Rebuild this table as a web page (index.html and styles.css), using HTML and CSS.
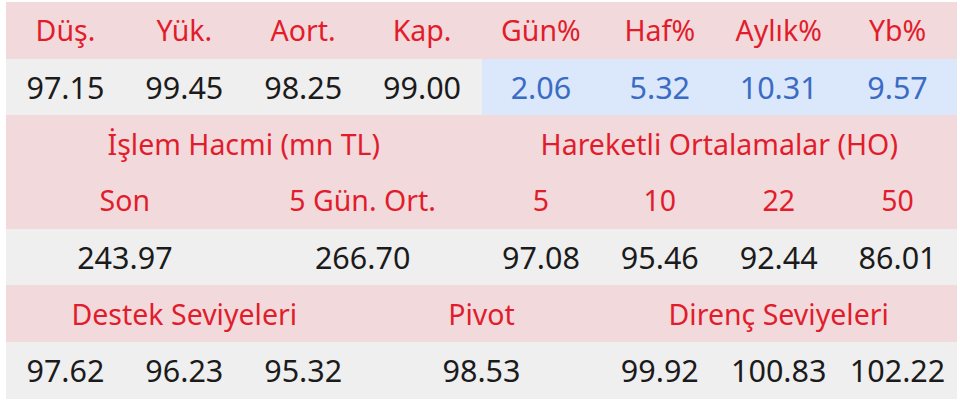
FILE: index.html
```html
<!DOCTYPE html>
<html lang="tr">
<head>
<meta charset="utf-8">
<link rel="stylesheet" href="styles.css">
</head>
<body>
<div class="wrap">
<table class="tbl">
  <colgroup>
    <col><col><col><col><col><col><col><col>
  </colgroup>
  <tr class="head">
    <td>Düş.</td><td>Yük.</td><td>Aort.</td><td>Kap.</td>
    <td>Gün%</td><td>Haf%</td><td>Aylık%</td><td>Yb%</td>
  </tr>
  <tr class="vals">
    <td>97.15</td><td>99.45</td><td>98.25</td><td>99.00</td>
    <td class="pct">2.06</td><td class="pct">5.32</td><td class="pct">10.31</td><td class="pct">9.57</td>
  </tr>
  <tr class="head">
    <td colspan="4">İşlem Hacmi (mn TL)</td>
    <td colspan="4">Hareketli Ortalamalar (HO)</td>
  </tr>
  <tr class="head">
    <td colspan="2">Son</td><td colspan="2">5 Gün. Ort.</td>
    <td>5</td><td>10</td><td>22</td><td>50</td>
  </tr>
  <tr class="vals">
    <td colspan="2">243.97</td><td colspan="2">266.70</td>
    <td>97.08</td><td>95.46</td><td>92.44</td><td>86.01</td>
  </tr>
  <tr class="head">
    <td colspan="3">Destek Seviyeleri</td>
    <td colspan="2">Pivot</td>
    <td colspan="3">Direnç Seviyeleri</td>
  </tr>
  <tr class="vals">
    <td>97.62</td><td>96.23</td><td>95.32</td>
    <td colspan="2">98.53</td>
    <td>99.92</td><td>100.83</td><td>102.22</td>
  </tr>
</table>
</div>
</body>
</html>
```
FILE: styles.css
```css
html, body {
  margin: 0;
  padding: 0;
  background: #ffffff;
}
.wrap {
  padding: 2px 3px 0 6px;
}
.tbl {
  width: 951px;
  table-layout: fixed;
  border-collapse: collapse;
  font-family: "Noto Sans", "Open Sans", sans-serif;
}
.tbl td {
  padding: 0;
  height: 56.7px;
  text-align: center;
  vertical-align: middle;
  white-space: nowrap;
  line-height: 1.2;
}
.head td {
  background: #f2d9dc;
  color: #e11d2c;
  font-size: 28.5px;
}
.vals td {
  background: #efefef;
  color: #1b1b1b;
  font-size: 30.5px;
}
.vals td.pct {
  background: #dbe7fb;
  color: #3a6cc4;
}
```
